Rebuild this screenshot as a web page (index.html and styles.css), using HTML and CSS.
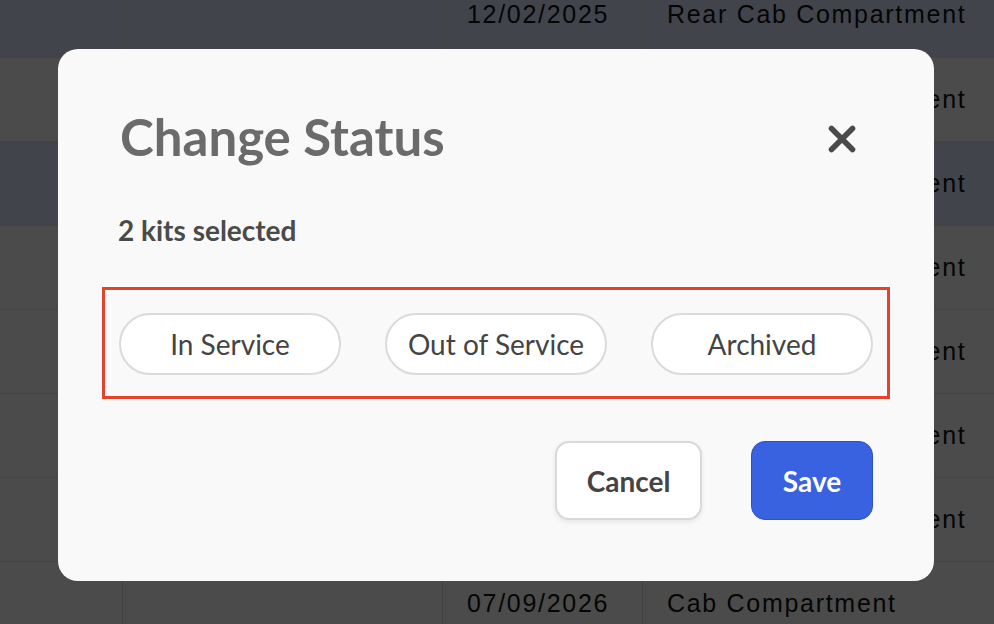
FILE: index.html
```html
<!DOCTYPE html>
<html lang="en">
<head>
<meta charset="utf-8">
<title>Change Status</title>
<link rel="stylesheet" href="styles.css">
</head>
<body>
<div class="table-wrap">
  <table class="kits">
    <tbody>
      <tr class="sel"><td class="c1"></td><td class="c2"></td><td class="c3">12/02/2025</td><td class="c4">Rear Cab Compartment</td></tr>
      <tr><td class="c1"></td><td class="c2"></td><td class="c3">03/14/2025</td><td class="c4">Rear Cab Compartment</td></tr>
      <tr class="sel"><td class="c1"></td><td class="c2"></td><td class="c3">05/22/2025</td><td class="c4">Rear Cab Compartment</td></tr>
      <tr><td class="c1"></td><td class="c2"></td><td class="c3">08/01/2025</td><td class="c4">Rear Cab Compartment</td></tr>
      <tr><td class="c1"></td><td class="c2"></td><td class="c3">10/18/2025</td><td class="c4">Rear Cab Compartment</td></tr>
      <tr><td class="c1"></td><td class="c2"></td><td class="c3">01/09/2026</td><td class="c4">Rear Cab Compartment</td></tr>
      <tr><td class="c1"></td><td class="c2"></td><td class="c3">04/27/2026</td><td class="c4">Rear Cab Compartment</td></tr>
      <tr><td class="c1"></td><td class="c2"></td><td class="c3">07/09/2026</td><td class="c4">Cab Compartment</td></tr>
    </tbody>
  </table>
</div>

<div class="overlay">
  <div class="modal" role="dialog" aria-labelledby="modal-title">
    <div class="modal-header">
      <h2 id="modal-title" class="modal-title">Change Status</h2>
      <button class="close-btn" aria-label="Close">
        <svg width="28" height="28" viewBox="0 0 28 28" aria-hidden="true">
          <path d="M3.5 3.5 L24.5 24.5 M24.5 3.5 L3.5 24.5" stroke="#4a4a4a" stroke-width="5.6" stroke-linecap="round" fill="none"/>
        </svg>
      </button>
    </div>
    <p class="selected-count">2 kits selected</p>
    <div class="status-options">
      <button class="pill">In Service</button>
      <button class="pill">Out of Service</button>
      <button class="pill">Archived</button>
    </div>
    <div class="actions">
      <button class="btn btn-cancel">Cancel</button>
      <button class="btn btn-save">Save</button>
    </div>
  </div>
</div>
</body>
</html>
```

FILE: styles.css
```css
html, body {
  margin: 0;
  padding: 0;
  height: 100%;
  overflow: hidden;
  background: #ffffff;
}

.table-wrap {
  margin-top: -27px;
}

.kits {
  border-collapse: collapse;
  width: 1000px;
  table-layout: fixed;
  font-family: "Liberation Sans", Arial, sans-serif;
  font-size: 25px;
  letter-spacing: 1.7px;
  color: #111111;
}

.kits tr {
  height: 84px;
  background: #ffffff;
  border-bottom: 1px solid #e6e6e6;
}

.kits tr.sel {
  background: #dfe8ff;
}

.kits td {
  padding: 0 0 0 24px;
  border-right: 1px solid #e7e0da;
  white-space: nowrap;
  overflow: hidden;
  vertical-align: middle;
}

.kits .c1 { width: 98px; }
.kits .c2 { width: 295px; }
.kits .c3 { width: 175px; }
.kits .c4 { border-right: none; }

.overlay {
  position: fixed;
  inset: 0;
  background: rgba(0, 0, 0, 0.706);
  display: flex;
  justify-content: flex-start;
  align-items: flex-start;
  padding: 49px 0 0 58px;
}

.modal {
  width: 876px;
  box-sizing: border-box;
  background: #f9f9f9;
  border-radius: 20px;
  padding: 60px 61px 61px 62px;
  font-family: Lato, "Open Sans", sans-serif;
  display: flex;
  flex-direction: column;
}

.modal-header {
  display: flex;
  align-items: center;
  justify-content: space-between;
}

.modal-title {
  margin: 0;
  font-size: 51px;
  font-weight: 700;
  color: #6b6b6b;
  line-height: 55px;
}

.close-btn {
  border: none;
  background: none;
  padding: 0;
  margin: 5px 17px 0 0;
  width: 28px;
  height: 28px;
  display: flex;
  cursor: pointer;
}

.selected-count {
  margin: 50px 0 0 -2px;
  font-size: 28px;
  font-weight: 700;
  color: #4a4a4a;
  line-height: 32px;
}

.status-options {
  margin: 41px -17px 0 -18px;
  border: 3px solid #e5432c;
  padding: 23px 14px 21px;
  display: flex;
  justify-content: space-between;
}

.pill {
  width: 222px;
  height: 62px;
  box-sizing: border-box;
  border: 2px solid #dadada;
  border-radius: 31px;
  background: #ffffff;
  font-family: Lato, "Open Sans", sans-serif;
  font-size: 28px;
  font-weight: 400;
  color: #444444;
  padding: 0;
  cursor: pointer;
}

.actions {
  margin-top: 42px;
  display: flex;
  justify-content: flex-end;
  gap: 49px;
}

.btn {
  height: 79px;
  box-sizing: border-box;
  border-radius: 14px;
  font-family: Lato, "Open Sans", sans-serif;
  font-size: 28px;
  font-weight: 700;
  padding: 0;
  cursor: pointer;
}

.btn-cancel {
  width: 147px;
  background: #ffffff;
  border: 2px solid #d9d9d9;
  color: #444444;
  box-shadow: 0 2px 5px rgba(0, 0, 0, 0.08);
}

.btn-save {
  width: 122px;
  background: #3962e0;
  border: 1px solid #2e53c6;
  color: #ffffff;
}
```
